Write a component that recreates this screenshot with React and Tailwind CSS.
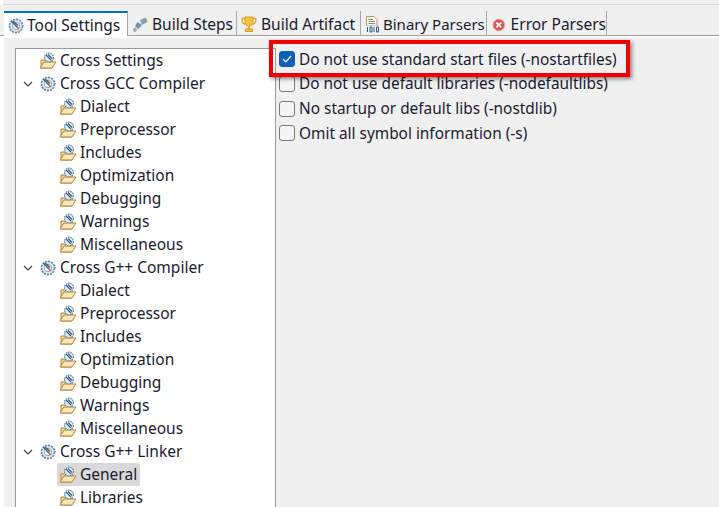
import { useState } from 'react';

const font = { fontFamily: '"Noto Sans", sans-serif' };

function GearIcon({ className = '' }) {
  return (
    <svg width="16" height="16" viewBox="0 0 16 16" className={className}>
      <circle cx="8" cy="8" r="6.6" fill="#dbe6ee" stroke="#5f88a8" strokeWidth="1.6" strokeDasharray="2.2 0.9" />
      <circle cx="8" cy="8" r="3.6" fill="#f4f7fa" stroke="#7d9cb6" strokeWidth="0.8" />
      <path d="M3.5 3.5 L9 9 M5 3 L10 7.5" stroke="#3f5f80" strokeWidth="1.3" fill="none" />
      <path d="M8.5 8.5 L11 11" stroke="#c05a4a" strokeWidth="1.2" />
    </svg>
  );
}

function FolderIcon() {
  return (
    <svg width="18" height="18" viewBox="0 0 18 18">
      <path d="M2 8 L2 16 L13 16 L13 8 Z" fill="#f6d79a" stroke="#b98434" strokeWidth="1" />
      <path d="M1 16 L5 10 L17 10 L13 16 Z" fill="#fbe7b8" stroke="#b98434" strokeWidth="1" strokeLinejoin="round" />
      <circle cx="10" cy="5.5" r="4.4" fill="#e4ecf3" stroke="#5f88a8" strokeWidth="1.2" strokeDasharray="1.6 0.8" />
      <path d="M7 3 L12 8 M9 2.5 L13 6.5" stroke="#3f5f80" strokeWidth="1.1" fill="none" />
    </svg>
  );
}

function StepsIcon() {
  return (
    <svg width="16" height="16" viewBox="0 0 16 16">
      <path d="M8 3 L14 0.5 L15.5 5 L10 8 Z" fill="#8a9cad" />
      <path d="M5.5 5 L10 8 L6.5 12 L3 9 Z" fill="#7b8fa3" />
      <path d="M3 10 L5.5 12.5 L3 15.5 L0.5 13 Z" fill="#9fb0bf" />
    </svg>
  );
}

function TrophyIcon() {
  return (
    <svg width="16" height="17" viewBox="0 0 16 17">
      <path d="M4 1 H12 V6 C12 9 10 10 8 10 C6 10 4 9 4 6 Z" fill="#f8c23c" stroke="#d99a1c" />
      <path d="M4 2.5 H1.2 V5 C1.2 7 3 8 4.5 8 M12 2.5 H14.8 V5 C14.8 7 13 8 11.5 8" fill="none" stroke="#e0a526" strokeWidth="1.3" />
      <path d="M7 10 H9 V13 H7 Z" fill="#f3b52e" />
      <path d="M4.5 13 H11.5 V15.5 H4.5 Z" fill="#f8c23c" stroke="#d99a1c" />
    </svg>
  );
}

function BinaryIcon() {
  return (
    <svg width="16" height="17" viewBox="0 0 16 17">
      <path d="M1.5 0.5 H9 L12 3.5 V10 H1.5 Z" fill="#fbf7ea" stroke="#b99b5a" />
      <path d="M3.5 3.5 H8 M3.5 5.5 H10 M3.5 7.5 H10" stroke="#7c8ea3" />
      <rect x="1" y="10" width="14" height="6.5" fill="#eef2f6" />
      <path d="M2.5 11 V16 M5 11 H7 V16 H5 Z M9 11 V16 M11.5 11 H13.5 V16 H11.5 Z" fill="none" stroke="#2c5a8c" />
    </svg>
  );
}

function ErrorIcon() {
  return (
    <svg width="14" height="14" viewBox="0 0 14 14">
      <circle cx="7" cy="7" r="6" fill="#e2534f" stroke="#d9a0a0" />
      <path d="M4.5 4.5 L9.5 9.5 M9.5 4.5 L4.5 9.5" stroke="#ffffff" strokeWidth="1.8" />
    </svg>
  );
}

function Chevron() {
  return (
    <svg width="10" height="6" viewBox="0 0 10 6">
      <path d="M1 1 L5 5 L9 1" fill="none" stroke="#404040" strokeWidth="1.2" />
    </svg>
  );
}

const tabs = [
  { label: 'Tool Settings', className: 'w-[124px] gap-[3px] pl-[4px]', icon: <GearIcon />, active: true },
  { label: 'Build Steps', className: 'w-[109px] gap-[4px] pl-[4px]', icon: <StepsIcon /> },
  { label: 'Build Artifact', className: 'w-[124px] gap-[4px] pl-[4px]', icon: <TrophyIcon /> },
  { label: 'Binary Parsers', className: 'w-[126px] gap-[2px] pl-[4px] text-[15px]', icon: <BinaryIcon /> },
  { label: 'Error Parsers', className: 'w-[120px] gap-[5px] pl-[5px]', icon: <ErrorIcon /> },
];

const compilerChildren = ['Dialect', 'Preprocessor', 'Includes', 'Optimization', 'Debugging', 'Warnings', 'Miscellaneous'];

const treeRows = [
  { label: 'Cross Settings', folder: true, indent: 'pl-[23px]' },
  { label: 'Cross GCC Compiler', parent: true },
  ...compilerChildren.map((label) => ({ label, folder: true, indent: 'pl-[43px]' })),
  { label: 'Cross G++ Compiler', parent: true },
  ...compilerChildren.map((label) => ({ label, folder: true, indent: 'pl-[43px]' })),
  { label: 'Cross G++ Linker', parent: true },
  { label: 'General', folder: true, indent: 'pl-[43px]', selected: true },
  { label: 'Libraries', folder: true, indent: 'pl-[43px]' },
];

const options = [
  { label: 'Do not use standard start files (-nostartfiles)', checked: true },
  { label: 'Do not use default libraries (-nodefaultlibs)' },
  { label: 'No startup or default libs (-nostdlib)' },
  { label: 'Omit all symbol information (-s)' },
];

function TreeRow({ row }) {
  if (row.parent) {
    return (
      <div className="flex h-[23px] items-center pl-[6px]">
        <span className="flex w-[18px] justify-start pl-[1px]">
          <Chevron />
        </span>
        <span className="flex w-[20px] justify-start">
          <GearIcon />
        </span>
        <span className="text-[#1a1a2e]">{row.label}</span>
      </div>
    );
  }
  return (
    <div className={`flex h-[23px] items-center ${row.indent}`}>
      <div className={`flex h-[23px] items-center gap-[3px] rounded-[2px] pr-[3px] ${row.selected ? 'bg-[#d9d9d9] pl-[2px] -ml-[2px]' : ''}`}>
        <FolderIcon />
        <span className="text-[#1a1a2e]">{row.label}</span>
      </div>
    </div>
  );
}

function OptionRow({ option }) {
  const [checked, setChecked] = useState(!!option.checked);
  return (
    <label className="flex h-[24.7px] items-center gap-[4px]">
      <input type="checkbox" checked={checked} onChange={() => setChecked(!checked)} className="peer sr-only" />
      <span
        className={`flex h-4 w-4 items-center justify-center rounded-[3px] border ${
          checked ? 'border-[#0f5fb5] bg-[#0f5fb5]' : 'border-[#7a7a7a] bg-[#f5f5f5]'
        }`}
      >
        {checked ? (
          <svg width="10" height="8" viewBox="0 0 10 8">
            <path d="M1 4 L3.8 6.8 L9 1" fill="none" stroke="#ffffff" strokeWidth="1.2" />
          </svg>
        ) : null}
      </span>
      <span className="text-[15.4px] text-[#1a1a2e]">{option.label}</span>
    </label>
  );
}

export default function App() {
  return (
    <div className="relative h-[507px] w-[719px] overflow-hidden bg-white text-[15.5px] leading-none" style={font}>
      <div className="ml-[3px] h-[5px] border-b border-[#d8d8d8] bg-[#f0f0f0]" />
      <div className="flex h-[31px] items-end border-b border-[#a0a0a0] bg-[#f0f0f0] pl-[4px] pt-[6px]">
        {tabs.map((tab) => (
          <div
            key={tab.label}
            className={`flex h-[24px] items-center border-r border-[#a8a8a8] pt-[3px] ${tab.className} ${
              tab.active ? 'mb-[-1px] h-[25px] border-t-2 border-t-[#0072c6] bg-white' : ''
            }`}
          >
            {tab.icon}
            <span className="whitespace-nowrap text-[#1a1a2e]">{tab.label}</span>
          </div>
        ))}
      </div>
      <div className="h-[2px] bg-white" />

      <div className="ml-[4px] flex h-[471px] bg-[#f0f0f0] pl-[11px] pt-[10px]">
        <div className="h-[461px] w-[261px] shrink-0 border border-b-0 border-[#9a9a9a] bg-white">
          {treeRows.map((row, index) => (
            <TreeRow key={index} row={row} />
          ))}
        </div>
        <div className="-mt-[1px] pl-[3px]">
          {options.map((option) => (
            <OptionRow key={option.label} option={option} />
          ))}
        </div>
      </div>

      <div className="pointer-events-none absolute left-[269px] top-[40px] h-[37px] w-[361px] border-4 border-[#f50000] shadow-[2px_2px_4px_rgba(0,0,0,0.45)]" />
    </div>
  );
}
